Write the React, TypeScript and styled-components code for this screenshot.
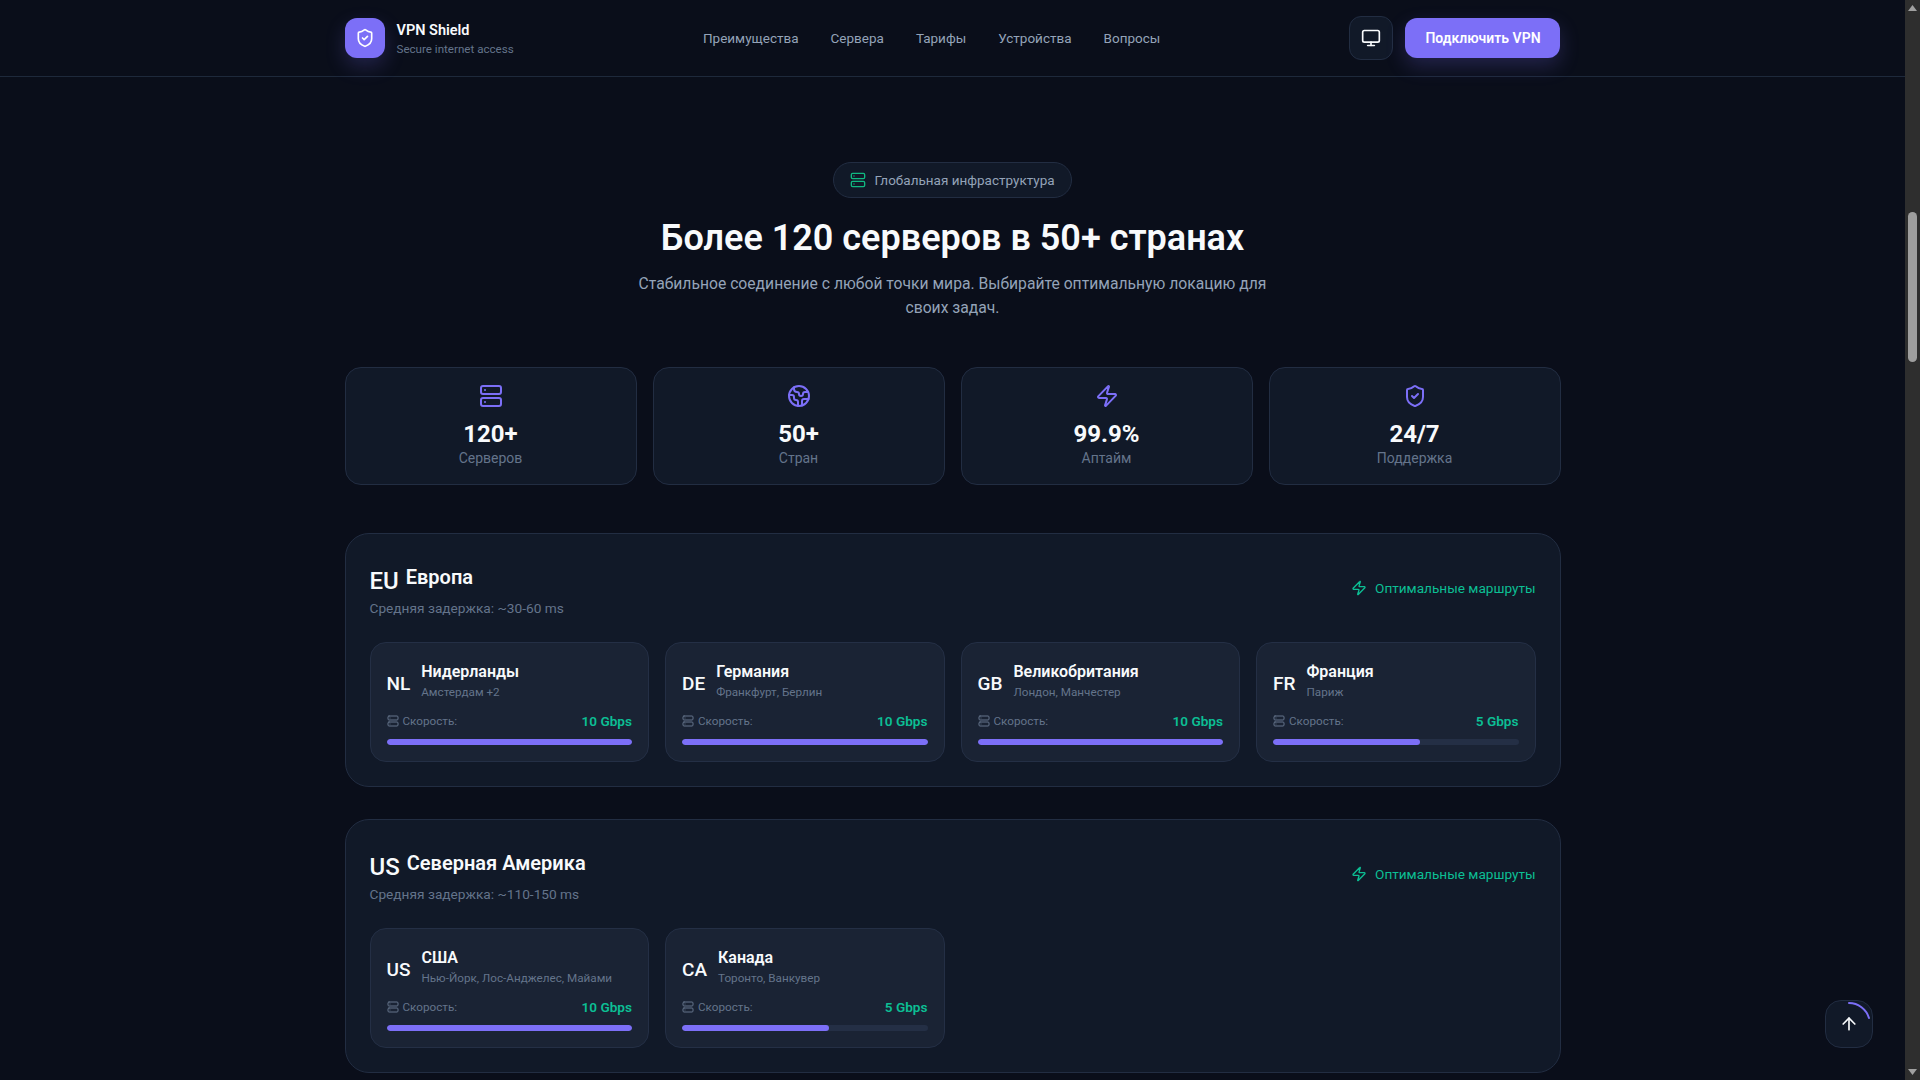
import React from 'react'
import styled, { createGlobalStyle } from 'styled-components'
import { ArrowUp, Earth, Monitor, Server, ShieldCheck, Zap } from 'lucide-react'

const GlobalStyle = createGlobalStyle`
  html, body {
    margin: 0;
    height: 100%;
    overflow: hidden;
    background: #0a0e1a;
  }
  * { box-sizing: border-box; }
  body {
    font-family: Roboto, "Noto Sans", sans-serif;
    color: #f8fafc;
  }
`

const Page = styled.div`
  display: flex;
  height: 100vh;
`
const Main = styled.div`
  flex: 1;
  min-width: 0;
  overflow: hidden;
`
const Header = styled.header`
  height: 77px;
  border-bottom: 1px solid #1e293b;
  background: #0a0e1a;
`
const HeaderInner = styled.div`
  width: 1216px;
  height: 76px;
  margin: 0 auto;
  display: flex;
  align-items: center;
  justify-content: space-between;
`
const Brand = styled.div`
  display: flex;
  align-items: center;
  gap: 12px;
`
const LogoBox = styled.div`
  width: 40px;
  height: 40px;
  border-radius: 12px;
  background: #7c6ff7;
  color: #fff;
  display: flex;
  align-items: center;
  justify-content: center;
  box-shadow: 0 8px 20px rgba(124, 111, 247, 0.22);
`
const BrandText = styled.div`
  display: flex;
  flex-direction: column;
  padding-top: 1px;
`
const BrandName = styled.span`
  font-size: 14.5px;
  line-height: 20px;
  font-weight: 600;
`
const BrandTag = styled.span`
  font-size: 11.6px;
  line-height: 16px;
  color: #64748b;
`
const Nav = styled.nav`
  display: flex;
  gap: 32px;
`
const NavLink = styled.a`
  font-size: 13.5px;
  line-height: 20px;
  color: #94a3b8;
`
const Actions = styled.div`
  display: flex;
  align-items: center;
  gap: 12px;
`
const ThemeButton = styled.button`
  width: 44px;
  height: 44px;
  border-radius: 12px;
  border: 1px solid #222d42;
  background: #111928;
  color: #f8fafc;
  display: flex;
  align-items: center;
  justify-content: center;
  padding: 0;
`
const ConnectButton = styled.button`
  height: 40px;
  width: 155px;
  border: 0;
  border-radius: 12px;
  background: #7c6ff7;
  color: #fff;
  font-family: inherit;
  font-size: 14px;
  font-weight: 600;
  padding: 0;
  box-shadow: 0 8px 20px rgba(124, 111, 247, 0.22);
`
const Content = styled.main`
  width: 1216px;
  margin: 0 auto;
  padding-top: 85px;
`
const Hero = styled.div`
  display: flex;
  flex-direction: column;
  align-items: center;
  text-align: center;
`
const Badge = styled.div`
  height: 36px;
  padding: 0 16px;
  border-radius: 18px;
  border: 1px solid #222d42;
  background: #111928;
  display: flex;
  align-items: center;
  gap: 8px;
  font-size: 13.5px;
  color: #94a3b8;
  svg { color: #10b981; }
`
const Title = styled.h2`
  margin: 18px 0 0;
  font-size: 36px;
  line-height: 45px;
  font-weight: 600;
`
const Subtitle = styled.p`
  margin: 11px 0 0;
  max-width: 672px;
  font-size: 15.7px;
  line-height: 24px;
  color: #94a3b8;
`
const Stats = styled.div`
  margin-top: 47px;
  display: grid;
  grid-template-columns: repeat(4, 1fr);
  gap: 16px;
`
const StatCard = styled.div`
  height: 118px;
  padding-top: 16px;
  border: 1px solid #222d42;
  border-radius: 16px;
  background: #111928;
  display: flex;
  flex-direction: column;
  align-items: center;
  svg { color: #7c6ff7; }
`
const StatValue = styled.div`
  margin-top: 12px;
  font-size: 24px;
  line-height: 29px;
  font-weight: 700;
`
const StatLabel = styled.div`
  font-size: 14px;
  line-height: 18px;
  color: #64748b;
`
const Region = styled.section`
  margin-top: 48px;
  & + & { margin-top: 32px; }
  padding: 24px;
  height: 254px;
  border: 1px solid #222d42;
  border-radius: 24px;
  background: #111928;
`
const RegionHead = styled.div`
  display: flex;
  align-items: center;
  justify-content: space-between;
  height: 60px;
`
const RegionInfo = styled.div`
  padding-top: 4px;
`
const RegionTitle = styled.h3`
  margin: 0;
  display: flex;
  align-items: baseline;
  gap: 7px;
  font-size: 20px;
  line-height: 28px;
  font-weight: 600;
`
const RegionCode = styled.span`
  font-size: 24px;
  position: relative;
  top: 5px;
  font-weight: 500;
`
const Latency = styled.div`
  margin-top: 7px;
  font-size: 13.7px;
  line-height: 20px;
  color: #64748b;
`
const Routes = styled.div`
  display: flex;
  align-items: center;
  gap: 8px;
  font-size: 13.6px;
  color: #0cbf94;
`
const CountryGrid = styled.div`
  margin-top: 24px;
  display: grid;
  grid-template-columns: repeat(4, 1fr);
  gap: 16px;
`
const CountryCard = styled.div`
  height: 120px;
  padding: 16px;
  border: 1px solid #242f45;
  border-radius: 16px;
  background: #1a2334;
`
const CountryHead = styled.div`
  margin-top: 1px;
  display: flex;
  align-items: center;
  gap: 11px;
`
const CountryCode = styled.span`
  font-size: 19px;
  font-weight: 500;
  position: relative;
  top: 3px;
`
const CountryText = styled.div`
  display: flex;
  flex-direction: column;
`
const CountryName = styled.span`
  font-size: 16px;
  line-height: 24px;
  font-weight: 600;
`
const Cities = styled.span`
  font-size: 11.7px;
  line-height: 16px;
  color: #64748b;
`
const SpeedRow = styled.div`
  margin-top: 11px;
  height: 20px;
  display: flex;
  align-items: center;
  justify-content: space-between;
`
const SpeedLabel = styled.span`
  display: flex;
  align-items: center;
  gap: 4px;
  font-size: 11.7px;
  color: #64748b;
`
const SpeedValue = styled.span`
  font-size: 13.6px;
  line-height: 20px;
  font-weight: 600;
  color: #0cbf94;
`
const Track = styled.div`
  margin-top: 8px;
  height: 6px;
  border-radius: 3px;
  background: #242f45;
  overflow: hidden;
`
const Fill = styled.div<{ $value: number }>`
  height: 100%;
  width: ${(props) => props.$value}%;
  border-radius: 3px;
  background: #7c6ff7;
`
const ScrollTop = styled.button`
  position: fixed;
  right: 47px;
  bottom: 32px;
  width: 48px;
  height: 48px;
  padding: 0;
  border-radius: 16px;
  border: 1px solid #222d42;
  background: #111928;
  color: #f8fafc;
  display: flex;
  align-items: center;
  justify-content: center;
`
const ProgressArc = styled.svg`
  position: absolute;
  left: -1px;
  top: -1px;
`
const Scrollbar = styled.div`
  width: 15px;
  background: #2e2e2e;
  display: flex;
  flex-direction: column;
  align-items: center;
  justify-content: space-between;
`
const ScrollArrow = styled.svg`
  display: block;
  margin: 5px 0;
`
const ScrollThumb = styled.div`
  width: 9px;
  height: 150px;
  border-radius: 5px;
  background: #9e9e9e;
  margin-top: 196px;
  margin-bottom: auto;
`

const stats = [
  { icon: <Server size={24} strokeWidth={2} />, value: '120+', label: 'Серверов' },
  { icon: <Earth size={24} strokeWidth={2} />, value: '50+', label: 'Стран' },
  { icon: <Zap size={24} strokeWidth={2} />, value: '99.9%', label: 'Аптайм' },
  { icon: <ShieldCheck size={24} strokeWidth={2} />, value: '24/7', label: 'Поддержка' },
]

const regions = [
  {
    code: 'EU',
    name: 'Европа',
    latency: 'Средняя задержка: ~30-60 ms',
    countries: [
      { code: 'NL', name: 'Нидерланды', cities: 'Амстердам +2', speed: 10 },
      { code: 'DE', name: 'Германия', cities: 'Франкфурт, Берлин', speed: 10 },
      { code: 'GB', name: 'Великобритания', cities: 'Лондон, Манчестер', speed: 10 },
      { code: 'FR', name: 'Франция', cities: 'Париж', speed: 5 },
    ],
  },
  {
    code: 'US',
    name: 'Северная Америка',
    latency: 'Средняя задержка: ~110-150 ms',
    countries: [
      { code: 'US', name: 'США', cities: 'Нью-Йорк, Лос-Анджелес, Майами', speed: 10 },
      { code: 'CA', name: 'Канада', cities: 'Торонто, Ванкувер', speed: 5 },
    ],
  },
]

const navItems = ['Преимущества', 'Сервера', 'Тарифы', 'Устройства', 'Вопросы']

const App = () => {
  return (
    <Page>
      <GlobalStyle />
      <Main>
        <Header>
          <HeaderInner>
            <Brand>
              <LogoBox>
                <ShieldCheck size={20} strokeWidth={2} />
              </LogoBox>
              <BrandText>
                <BrandName>VPN Shield</BrandName>
                <BrandTag>Secure internet access</BrandTag>
              </BrandText>
            </Brand>
            <Nav>
              {navItems.map((item) => (
                <NavLink key={item}>{item}</NavLink>
              ))}
            </Nav>
            <Actions>
              <ThemeButton>
                <Monitor size={20} strokeWidth={2} />
              </ThemeButton>
              <ConnectButton>Подключить VPN</ConnectButton>
            </Actions>
          </HeaderInner>
        </Header>
        <Content>
          <Hero>
            <Badge>
              <Server size={16} strokeWidth={2} />
              Глобальная инфраструктура
            </Badge>
            <Title>Более 120 серверов в 50+ странах</Title>
            <Subtitle>
              Стабильное соединение с любой точки мира. Выбирайте оптимальную локацию для своих задач.
            </Subtitle>
          </Hero>
          <Stats>
            {stats.map((stat) => (
              <StatCard key={stat.label}>
                {stat.icon}
                <StatValue>{stat.value}</StatValue>
                <StatLabel>{stat.label}</StatLabel>
              </StatCard>
            ))}
          </Stats>
          {regions.map((region) => (
            <Region key={region.name}>
              <RegionHead>
                <RegionInfo>
                  <RegionTitle>
                    <RegionCode>{region.code}</RegionCode>
                    {region.name}
                  </RegionTitle>
                  <Latency>{region.latency}</Latency>
                </RegionInfo>
                <Routes>
                  <Zap size={16} strokeWidth={2} />
                  Оптимальные маршруты
                </Routes>
              </RegionHead>
              <CountryGrid>
                {region.countries.map((country) => (
                  <CountryCard key={country.code}>
                    <CountryHead>
                      <CountryCode>{country.code}</CountryCode>
                      <CountryText>
                        <CountryName>{country.name}</CountryName>
                        <Cities>{country.cities}</Cities>
                      </CountryText>
                    </CountryHead>
                    <SpeedRow>
                      <SpeedLabel>
                        <Server size={12} strokeWidth={2} />
                        Скорость:
                      </SpeedLabel>
                      <SpeedValue>{country.speed} Gbps</SpeedValue>
                    </SpeedRow>
                    <Track>
                      <Fill $value={country.speed === 10 ? 100 : 60} />
                    </Track>
                  </CountryCard>
                ))}
              </CountryGrid>
            </Region>
          ))}
        </Content>
      </Main>
      <Scrollbar>
        <ScrollArrow width="9" height="6" viewBox="0 0 9 6">
          <path d="M4.5 0 9 6H0z" fill="#a0a0a0" />
        </ScrollArrow>
        <ScrollThumb />
        <ScrollArrow width="9" height="6" viewBox="0 0 9 6">
          <path d="M0 0h9L4.5 6z" fill="#a0a0a0" />
        </ScrollArrow>
      </Scrollbar>
      <ScrollTop>
        <ProgressArc width="48" height="48" viewBox="0 0 48 48" fill="none">
          <path d="M24 3a21 21 0 0 1 20 15" stroke="#7c6ff7" strokeWidth="2" strokeLinecap="round" />
        </ProgressArc>
        <ArrowUp size={20} strokeWidth={2} />
      </ScrollTop>
    </Page>
  )
}

export default App
